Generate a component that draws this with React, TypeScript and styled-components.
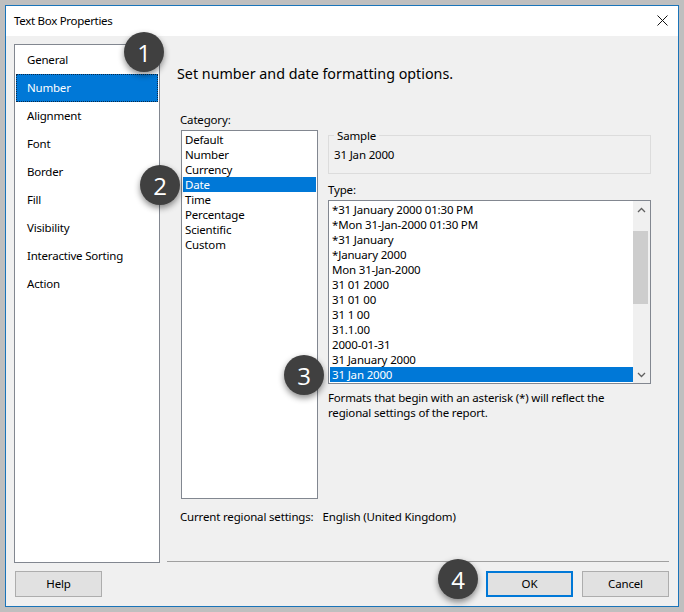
import React from "react";
import styled, { createGlobalStyle } from "styled-components";

const Global = createGlobalStyle`
  html, body { margin: 0; padding: 0; background: #bfbfbf; }
  body { width: 684px; height: 612px; overflow: hidden; font-family: "Noto Sans", "Open Sans", sans-serif; font-size: 11.5px; color: #000; letter-spacing: -0.17px; }
  #root { padding: 5px; box-sizing: border-box; width: 684px; height: 612px; }
`;

const Window = styled.div`
  position: relative; box-sizing: border-box; width: 674px; height: 602px;
  border: 1px solid #1a74b9; background: #f0f0f0; display: flex; flex-direction: column;
`;
const TitleBar = styled.div`
  height: 30px; flex: none; background: #fff; display: flex; align-items: center;
  justify-content: space-between; padding: 0 10px 1px 8px; box-sizing: border-box; letter-spacing: -0.3px;
`;
const Body = styled.div`
  display: flex; height: 519px; flex: none; margin: 8px 9px 0 8px; gap: 7px;
`;
const Sidebar = styled.div`
  box-sizing: border-box; width: 146px; flex: none; background: #fff; border: 1px solid #828790;
  padding: 1px; letter-spacing: -0.2px;
`;
const NavItem = styled.div<{ $active?: boolean }>`
  height: 28px; line-height: 27px; padding-left: 11px; box-sizing: border-box;
  ${(p) => p.$active ? "background:#0078d7;color:#fff;outline:1px dotted #0a2a4a;outline-offset:-1px;" : ""}
`;
const Panel = styled.div`
  flex: 1; display: flex; flex-direction: column; min-width: 0;
`;
const Heading = styled.div`
  margin: 20px 0 0 10px; font-size: 14.3px; line-height: 20px; letter-spacing: 0;
`;
const Columns = styled.div`
  display: flex; margin: 28px 0 0 14px; gap: 10px;
`;
const CategoryColumn = styled.div`
  width: 137px; flex: none; display: flex; flex-direction: column; 
`;
const DetailColumn = styled.div`
  width: 323px; flex: none; display: flex; flex-direction: column;
`;
const FieldLabel = styled.div`
  height: 16px; line-height: 16px; margin-bottom: 2px;
`;
const CategoryLabel = styled(FieldLabel)`
  margin-left: -1px;
`;
const ListBox = styled.div<{ $height: number }>`
  box-sizing: border-box; height: ${(p) => p.$height}px; background: #fff; border: 1px solid #828790;
  padding: 1px; display: flex; 
`;
const Rows = styled.div`
  flex: 1; min-width: 0;
`;
const Row = styled.div<{ $active?: boolean }>`
  height: 15px; line-height: 15px; padding-left: 2px; white-space: nowrap;
  ${(p) => p.$active ? "background:#0078d7;color:#fff;" : ""}
`;
const SampleGroup = styled.div`
  position: relative; box-sizing: border-box; height: 39px; margin: 23px 0 8px; border: 1px solid #dcdcdc;
  display: flex; align-items: center; padding: 0 0 1px 5px;
`;
const Legend = styled.span`
  position: absolute; left: 5px; top: -8px; background: #f0f0f0; padding: 0 3px; line-height: 15px;
`;
const TypeLabel = styled(FieldLabel)``;
const ScrollBar = styled.div`
  width: 17px; flex: none; margin: -1px -1px -1px 0; background: #f0f0f0; display: flex; flex-direction: column; align-items: stretch;
`;
const ScrollArrow = styled.div`
  height: 17px; flex: none; display: flex; align-items: center; justify-content: center; color: #606060;
`;
const Track = styled.div`
  flex: 1; padding-top: 13px;
`;
const Thumb = styled.div`
  height: 73px; width: 15px; background: #cdcdcd;
`;
const Note = styled.div`
  margin-top: 6px; line-height: 15px; width: 300px;
`;
const Regional = styled.div`
  margin: 10px 0 0 -1px; height: 16px; line-height: 16px; display: flex; gap: 9px; white-space: nowrap;
`;
const Separator = styled.div`
  height: 1px; background: #a0a0a0; margin: auto 0 1px;
`;
const Footer = styled.div`
  display: flex; align-items: flex-start; justify-content: space-between; margin: 8px 9px 0 9px;
`;
const ButtonGroup = styled.div`
  display: flex; gap: 9px;
`;
const Button = styled.button<{ $primary?: boolean }>`
  box-sizing: border-box; width: 87px; height: 26px; padding: 0 0 1px; background: #e1e1e1; color: #000;
  font: inherit; letter-spacing: inherit; border: ${(p) => p.$primary ? "2px solid #0078d7" : "1px solid #adadad"};
`;
const Badge = styled.div<{ $x: number; $y: number }>`
  position: absolute; left: ${(p) => p.$x - 26}px; top: ${(p) => p.$y - 26}px; width: 40px; height: 40px; border-radius: 50%;
  background: #404040; color: #fff; font-family: "Open Sans", sans-serif; font-size: 24px; letter-spacing: 0;
  display: flex; align-items: center; justify-content: center; box-shadow: 0 3px 6px rgba(0,0,0,.45);
`;

const nav = ["General", "Number", "Alignment", "Font", "Border", "Fill", "Visibility", "Interactive Sorting", "Action"];
const categories = ["Default", "Number", "Currency", "Date", "Time", "Percentage", "Scientific", "Custom"];
const types = ["*31 January 2000 01:30 PM", "*Mon 31-Jan-2000 01:30 PM", "*31 January", "*January 2000", "Mon 31-Jan-2000", "31 01 2000", "31 01 00", "31 1 00", "31.1.00", "2000-01-31", "31 January 2000", "31 Jan 2000"];

export default function App() {
  return (
    <>
      <Global />
      <Window>
        <TitleBar>
          <span>Text Box Properties</span>
          <svg width="11" height="11" viewBox="0 0 11 11"><path d="M.5.5l10 10M10.5.5l-10 10" stroke="#111" strokeWidth="1" fill="none" /></svg>
        </TitleBar>
        <Body>
          <Sidebar>
            {nav.map((n) => <NavItem key={n} $active={n === "Number"}>{n}</NavItem>)}
          </Sidebar>
          <Panel>
            <Heading>Set number and date formatting options.</Heading>
            <Columns>
              <CategoryColumn>
                <CategoryLabel>Category:</CategoryLabel>
                <ListBox $height={369}>
                  <Rows>{categories.map((c) => <Row key={c} $active={c === "Date"}>{c}</Row>)}</Rows>
                </ListBox>
                <Regional><span>Current regional settings:</span><span>English (United Kingdom)</span></Regional>
              </CategoryColumn>
              <DetailColumn>
                <SampleGroup><Legend>Sample</Legend>31 Jan 2000</SampleGroup>
                <TypeLabel>Type:</TypeLabel>
                <ListBox $height={184}>
                  <Rows>{types.map((t) => <Row key={t} $active={t === "31 Jan 2000"}>{t}</Row>)}</Rows>
                  <ScrollBar>
                    <ScrollArrow><svg width="9" height="6" viewBox="0 0 9 6"><path d="M1 5l3.5-3.5L8 5" stroke="currentColor" strokeWidth="1.3" fill="none" /></svg></ScrollArrow>
                    <Track><Thumb /></Track>
                    <ScrollArrow><svg width="9" height="6" viewBox="0 0 9 6"><path d="M1 1l3.5 3.5L8 1" stroke="currentColor" strokeWidth="1.3" fill="none" /></svg></ScrollArrow>
                  </ScrollBar>
                </ListBox>
                <Note>Formats that begin with an asterisk (*) will reflect the regional settings of the report.</Note>
              </DetailColumn>
            </Columns>
            <Separator />
          </Panel>
        </Body>
        <Footer>
          <Button>Help</Button>
          <ButtonGroup>
            <Button $primary>OK</Button>
            <Button>Cancel</Button>
          </ButtonGroup>
        </Footer>
        <Badge $x={144} $y={52}>1</Badge>
        <Badge $x={160} $y={185}>2</Badge>
        <Badge $x={304} $y={375}>3</Badge>
        <Badge $x={458} $y={579}>4</Badge>
      </Window>
    </>
  );
}
